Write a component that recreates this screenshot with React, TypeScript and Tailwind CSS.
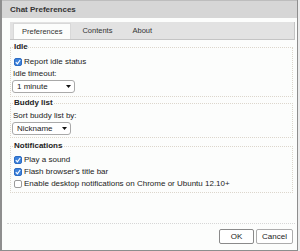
import React from "react";

const font = { fontFamily: '"Liberation Sans", Arial, sans-serif' };

function Check({ checked }: { checked: boolean }) {
  return checked ? (
    <span className="w-[8px] h-[8px] rounded-[2px] bg-[#3d82dc] border border-[#2c6bc2] flex items-center justify-center shrink-0">
      <svg width="6" height="6" viewBox="0 0 6 6">
        <path d="M0.8 3.2 L2.4 4.8 L5.2 1" stroke="white" strokeWidth="1.2" fill="none" />
      </svg>
    </span>
  ) : (
    <span className="w-[8px] h-[8px] rounded-[2px] bg-white border border-[#9a9a9a] shrink-0" />
  );
}

function Row({ checked, label }: { checked: boolean; label: string }) {
  return (
    <div className="h-[12px] flex items-center gap-[2px] text-[8px] text-[#222]">
      <Check checked={checked} />
      <span>{label}</span>
    </div>
  );
}

function Select({ value, w }: { value: string; w: string }) {
  return (
    <div
      className={`${w} h-[13px] -ml-[2px] bg-white border border-[#a9a9a9] rounded-[3px] flex items-center justify-between pl-[4px] pr-[3px] text-[8px] text-[#222]`}
    >
      <span>{value}</span>
      <svg width="5" height="3" viewBox="0 0 5 3">
        <path d="M0 0 H5 L2.5 3 Z" fill="#111" />
      </svg>
    </div>
  );
}

function Group({ title, children, className }: { title: string; children: React.ReactNode; className?: string }) {
  return (
    <fieldset className={`border border-dotted border-[#dcd6cc] px-[3px] ${className ?? ""}`}>
      <legend className="h-[12px] leading-[12px] text-[8px] font-bold text-[#222] px-0">{title}</legend>
      {children}
    </fieldset>
  );
}

export default function App() {
  return (
    <div className="w-[300px] h-[251px] bg-[#ececec] overflow-hidden" style={font}>
      <div className="w-[298px] h-[251px] flex flex-col border-l-2 border-r border-b border-[#8e8e8e]">
        <div className="h-[18px] shrink-0 bg-[#d6d6d6] border-t border-[#bdbdbd] flex items-center pl-[8px] text-[8px] font-bold text-[#333]">
          Chat Preferences
        </div>
        <div className="flex-1 bg-[#fcfdfc] flex flex-col pl-[5px] pr-[2px]">
          <div className="mt-[4px] ml-[3px] h-[18px] bg-[#e2e2e2] border-b border-r border-[#c4c4c4] flex items-end pl-[3px] text-[7.5px] text-[#333]">
            <div className="h-[16px] bg-[#fcfdfc] border-t border-l border-r border-[#d8d8d8] flex items-center px-[8px]">
              Preferences
            </div>
            <div className="h-[16px] flex items-center pl-[11px] pr-[10px]">Contents</div>
            <div className="h-[16px] flex items-center px-[10px]">About</div>
          </div>
          <div className="ml-[3px] mr-[2px] flex flex-col">
            <Group title="Idle" className="mt-[1px] pb-[3px]">
              <div className="mt-[3px]">
                <Row checked label="Report idle status" />
              </div>
              <div className="h-[11px] flex items-center -ml-[1px] text-[8px] text-[#222]">Idle timeout:</div>
              <div className="mt-[1px]">
                <Select value="1 minute" w="w-[63px]" />
              </div>
            </Group>
            <Group title="Buddy list" className="pb-[2px]">
              <div className="mt-[1px] h-[11px] flex items-center -ml-[1px] text-[8px] text-[#222]">Sort buddy list by:</div>
              <div className="mt-[1px]">
                <Select value="Nickname" w="w-[59px]" />
              </div>
            </Group>
            <Group title="Notifications" className="mt-[2px] pb-[2px]">
              <div className="mt-[2px]">
                <Row checked label="Play a sound" />
                <Row checked label="Flash browser's title bar" />
                <Row checked={false} label="Enable desktop notifications on Chrome or Ubuntu 12.10+" />
              </div>
            </Group>
          </div>
          <div className="mt-[30px] border-t border-dotted border-[#d6d6d6]" />
          <div className="mt-[5px] flex justify-end gap-[2px] pr-[2px]">
            <button className="w-[35px] h-[15px] bg-white border border-[#8a8a8a] rounded-[2px] text-[8px] text-[#222] flex items-center justify-center">
              OK
            </button>
            <button className="w-[37px] h-[15px] bg-white border border-[#acacac] rounded-[2px] text-[8px] text-[#222] flex items-center justify-center">
              Cancel
            </button>
          </div>
        </div>
      </div>
    </div>
  );
}
